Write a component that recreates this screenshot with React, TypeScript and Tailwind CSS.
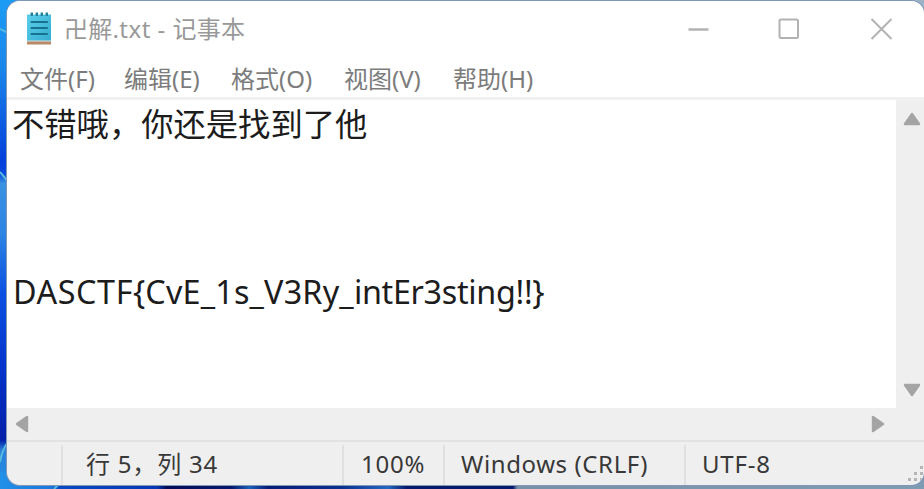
import React from "react";

function Wallpaper() {
  return (
    <svg className="absolute inset-0" width="924" height="489" viewBox="0 0 924 489" fill="none">
      <defs>
        <linearGradient id="left" x1="0" y1="0" x2="0" y2="489" gradientUnits="userSpaceOnUse">
          <stop offset="0" stopColor="#1c9cf5" />
          <stop offset="0.14" stopColor="#1a86ea" />
          <stop offset="0.33" stopColor="#0440dc" />
          <stop offset="0.355" stopColor="#0648dc" />
          <stop offset="0.375" stopColor="#3a92e2" />
          <stop offset="0.48" stopColor="#2c84e4" />
          <stop offset="0.6" stopColor="#0a50e2" />
          <stop offset="0.75" stopColor="#0534cc" />
          <stop offset="0.9" stopColor="#031fa8" />
          <stop offset="0.92" stopColor="#2a7fd8" />
          <stop offset="1" stopColor="#2090e8" />
        </linearGradient>
        <linearGradient id="bottom" x1="0" y1="0" x2="924" y2="0" gradientUnits="userSpaceOnUse">
          <stop offset="0" stopColor="#2090e8" />
          <stop offset="0.055" stopColor="#1b78dc" />
          <stop offset="0.065" stopColor="#0648c4" />
          <stop offset="0.17" stopColor="#0638b4" />
          <stop offset="0.18" stopColor="#040c58" />
          <stop offset="0.25" stopColor="#06186c" />
          <stop offset="0.27" stopColor="#1a60b8" />
          <stop offset="0.29" stopColor="#071c78" />
          <stop offset="0.37" stopColor="#0a3090" />
          <stop offset="0.42" stopColor="#2468c0" />
          <stop offset="0.44" stopColor="#06186c" />
          <stop offset="0.555" stopColor="#06186c" />
          <stop offset="0.56" stopColor="#7890a8" />
          <stop offset="1" stopColor="#7f9bb4" />
        </linearGradient>
      </defs>
      <rect width="924" height="489" fill="#c9d1e0" />
      <rect width="26" height="489" fill="url(#left)" />
      <rect y="472" width="924" height="17" fill="url(#bottom)" />
      <path d="M0 29 L8 33 M0 172 L9 183 M0 462 Q2 450 8 442 M54 489l6-6" stroke="#55b9df" strokeWidth="2" />
      <path d="M910 0h14v18z" fill="#9cb2c6" />
    </svg>
  );
}

function NotepadIcon() {
  return (
    <svg className="ml-[19px] mt-[11px] shrink-0" width="26" height="34" viewBox="0 0 26 34">
      <defs>
        <linearGradient id="pad" x1="0" y1="0" x2="1" y2="1">
          <stop offset="0" stopColor="#5ccfea" />
          <stop offset="1" stopColor="#35acd0" />
        </linearGradient>
      </defs>
      <path d="M1 28h24v4.5H1z" fill="#b88a68" />
      <path d="M1 27.5h24v2H1z" fill="#d8e3e6" />
      <path d="M1 2.5h24v26H1z" fill="url(#pad)" />
      <path d="M5.8 0.500v3.500M10.8 0.500v3.500M15.8 0.500v3.500M20.8 0.500v3.500" stroke="#237f9a" strokeWidth="2.4" />
      <path d="M5.5 10h15.500M5.500 16h15.500M5.500 22h15.500" stroke="#167390" strokeWidth="2.2" strokeLinecap="round" />
    </svg>
  );
}

function Arrow({ d }: { d: string }) {
  return (
    <svg width="18" height="18" viewBox="0 0 18 18">
      <path d={d} fill="#a4a4a4" stroke="#a4a4a4" strokeWidth="2.4" strokeLinejoin="round" />
    </svg>
  );
}

function TitleBar() {
  return (
    <header className="flex h-[59px] shrink-0 items-start">
      <NotepadIcon />
      <h1 className="ml-[12px] mt-[11px] w-[200px] whitespace-nowrap text-[24px] leading-[34px] tracking-[0.2px] text-[#999]">
        卍解<span className="tracking-[0.5px]">.txt - </span>记事本
      </h1>
      <svg className="ml-auto mr-[31px] mt-[16px] shrink-0" width="206" height="24" viewBox="0 0 206 24" fill="none" stroke="#b2b2b2" strokeWidth="2">
        <path d="M1.500 12.500h20" strokeWidth="2.500" />
        <rect x="92.500" y="2.500" width="18.500" height="18.500" rx="1.500" />
        <path d="M184.500 2l20 20M204.500 2l-20 20" />
      </svg>
    </header>
  );
}

function MenuBar() {
  return (
    <nav className="flex h-[37px] shrink-0 whitespace-nowrap pl-[13px] text-[24px] leading-[38px] text-[#7c7c7c]">
      <span className="w-[104px]">文件<span>(F)</span></span>
      <span className="w-[107px]">编辑<span>(E)</span></span>
      <span className="w-[113px]">格式<span>(O)</span></span>
      <span className="w-[109px]">视图<span>(V)</span></span>
      <span>帮助<span>(H)</span></span>
    </nav>
  );
}

function Editor() {
  return (
    <main className="flex h-[308px] shrink-0 bg-white">
      <div className="min-w-0 flex-1 whitespace-pre pl-[5px] pt-[2px] text-[32.300px] leading-[42px] text-[#1c1c1c]">
        <p className="h-[42px]">不错哦，你还是找到了他</p>
        <p className="h-[42px]" />
        <p className="h-[42px]" />
        <p className="h-[42px]" />
        <p className="h-[42px] pl-px"><span className="tracking-[0.6px]">DASCTF</span>&#123;<span className="tracking-[0.2px]">CvE_1s_V3Ry_</span><span className="tracking-[-0.3px]">intEr3sting!!&#125;</span></p>
      </div>
      <div className="flex w-[28px] shrink-0 flex-col items-center justify-between bg-[#efefef] pb-[9px] pl-[3px] pt-[10px]">
        <Arrow d="M9 4l7 10H2z" />
        <Arrow d="M9 14L2 4h14z" />
      </div>
    </main>
  );
}

function StatusBar() {
  return (
    <footer className="flex flex-1 whitespace-nowrap border-t-2 border-[#e2e2e2] text-[24px] leading-[44px] text-[#383838]">
      <div className="mt-[3px] w-[56px] border-r-2 border-[#e0e0e0]" />
      <div className="mt-[3px] w-[281px] border-r-2 border-[#e0e0e0] pl-[23px] tracking-[0.8px]"><p className="-mt-[3px]">行 5，列 34</p></div>
      <div className="mt-[3px] w-[101px] border-r-2 border-[#e0e0e0] pl-[17px] tracking-[0.8px]"><p className="-mt-[3px]">100%</p></div>
      <div className="mt-[3px] w-[241px] border-r-2 border-[#e0e0e0] pl-[16px] tracking-[0.6px]"><p className="-mt-[3px]">Windows (CRLF)</p></div>
      <div className="pl-[16px] tracking-[0.8px]">UTF-8</div>
      <svg className="mb-[2px] ml-auto mt-auto" width="18" height="20" viewBox="0 0 18 20" fill="#b5b5b5">
        <path d="M14 2h3v3h-3zM8 8h3v3H8zM14 8h3v3h-3zM2 14h3v3H2zM8 14h3v3H8zM14 14h3v3h-3z" />
      </svg>
    </footer>
  );
}

export default function App() {
  return (
    <div className="relative h-[489px] w-[924px] overflow-hidden font-['Noto_Sans','Noto_Sans_CJK_SC',sans-serif]">
      <Wallpaper />
      <div className="relative ml-[7px] mt-px flex h-[484px] w-[917px] flex-col overflow-hidden rounded-[13px] bg-[#efefef] shadow-[0_0_0_1px_#8098b8]">
        <div className="flex h-[96px] shrink-0 flex-col bg-white">
          <TitleBar />
          <MenuBar />
        </div>
        <div className="h-[3px] shrink-0 bg-[#f0f0f0]" />
        <Editor />
        <div className="flex h-[32px] shrink-0 items-center justify-between pl-[6px] pr-[37px]">
          <Arrow d="M4 9l10-7v14z" />
          <Arrow d="M14 9L4 2v14z" />
        </div>
        <StatusBar />
      </div>
    </div>
  );
}
